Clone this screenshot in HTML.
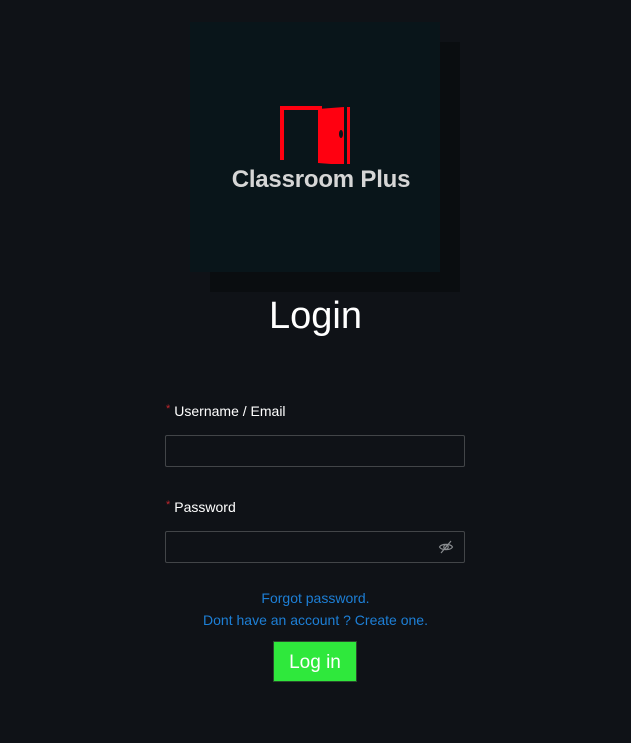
<!DOCTYPE html>
<html><head><style>
body{margin:0;width:631px;height:743px;background:#0f1217;font-family:"Liberation Sans",sans-serif;position:relative;overflow:hidden}
.a{position:absolute}
.lbl{color:#fff;font-size:14px}
.lbl span{color:#c0262d;font-size:11px;margin-right:4px;vertical-align:top}
.in{border:1px solid #424548;border-radius:2px;width:298px;height:30px;left:165px}
.lnk{color:#1d7fd6;font-size:14px;width:631px;text-align:center;left:0}
</style></head><body>
<div class="a" style="left:210px;top:42px;width:250px;height:250px;background:#0a0d10"></div>
<div class="a" style="left:190px;top:22px;width:250px;height:250px;background:#09151a"></div>
<svg class="a" style="left:278px;top:104px" width="74" height="60" viewBox="0 0 74 60">
<path d="M2 56V2h42v4H6v50z" fill="#ff0010"/>
<path d="M40 5l26-2v58l-26-2z" fill="#ff0010"/>
<rect x="69" y="3" width="3" height="58" fill="#ff0010"/>
<ellipse cx="63" cy="30" rx="2" ry="4" fill="#09151a"/>
</svg>
<div class="a" style="left:190px;top:166px;width:262px;text-align:center;color:#d6d6d6;font-weight:bold;font-size:24px;letter-spacing:-0.2px">Classroom Plus</div>
<div class="a" style="left:0;width:631px;top:295px;text-align:center;color:#fff;font-size:38px">Login</div>
<div class="a lbl" style="left:166px;top:403px"><span>*</span>Username / Email</div>
<div class="a in" style="top:435px"></div>
<div class="a lbl" style="left:166px;top:499px"><span>*</span>Password</div>
<div class="a in" style="top:531px"></div>
<svg class="a" style="left:438px;top:539px" width="16" height="16" viewBox="0 0 16 16" fill="none" stroke="#8a8d90" stroke-width="1.2"><path d="M1.5 8c2-3.5 11-3.5 13 0c-2 3.5-11 3.5-13 0z"/><circle cx="8" cy="8" r="2.2"/><path d="M3 14L13 2"/></svg>
<div class="a lnk" style="top:590px">Forgot password.</div>
<div class="a lnk" style="top:612px">Dont have an account ? Create one.</div>
<div class="a" style="left:273px;top:641px;width:82px;height:39px;background:#2fe83c;border:1px solid #2a4a2c;color:#fff;font-size:19px;text-align:center;line-height:42px">Log in</div>
</body></html>
